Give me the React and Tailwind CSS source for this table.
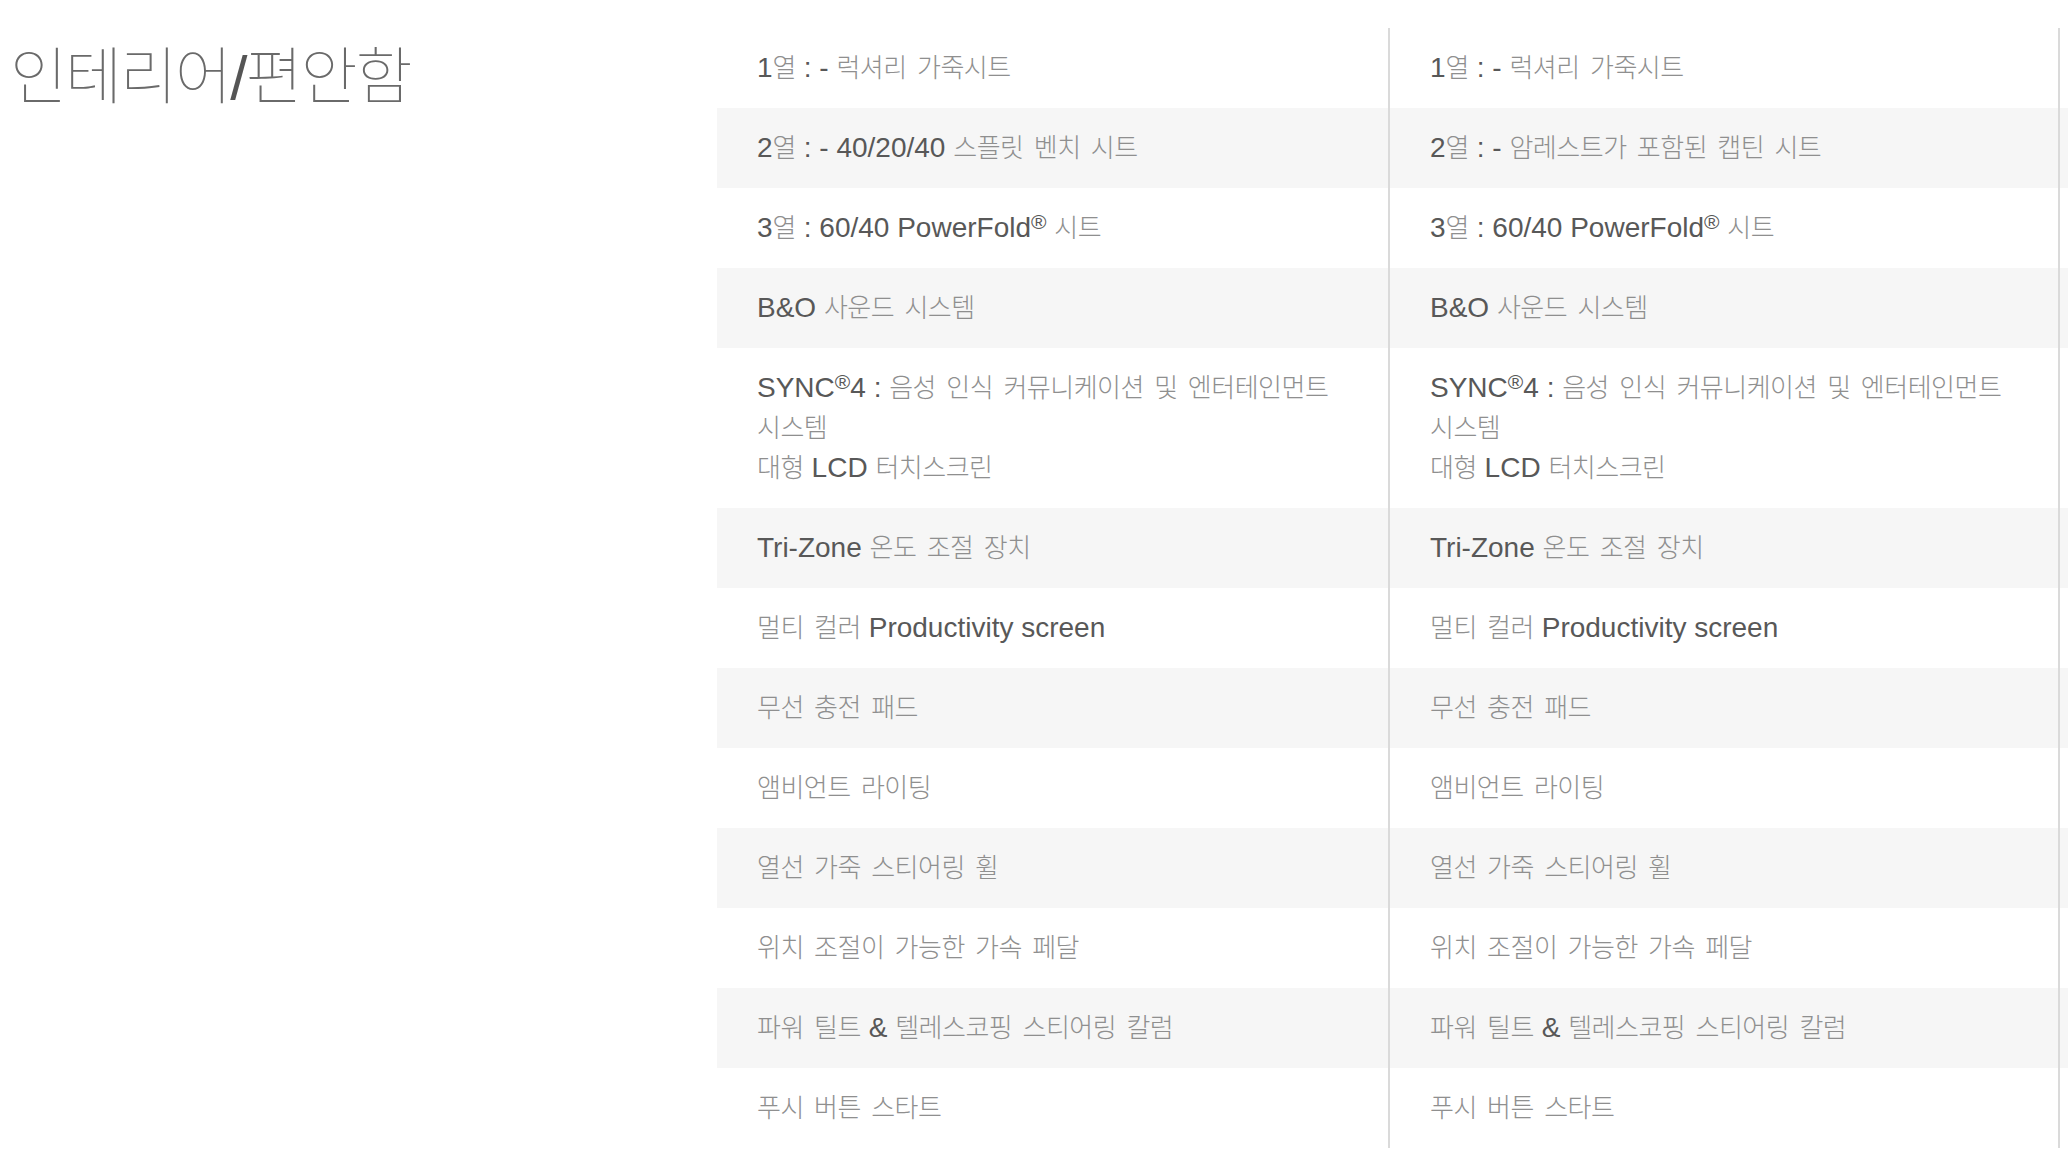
import React from "react";

const rows = [
  [["1열 : - 럭셔리 가죽시트"], ["1열 : - 럭셔리 가죽시트"]],
  [["2열 : - 40/20/40 스플릿 벤치 시트"], ["2열 : - 암레스트가 포함된 캡틴 시트"]],
  [["3열 : 60/40 PowerFold® 시트"], ["3열 : 60/40 PowerFold® 시트"]],
  [["B&O 사운드 시스템"], ["B&O 사운드 시스템"]],
  [
    ["SYNC®4 : 음성 인식 커뮤니케이션 및 엔터테인먼트", "시스템", "대형 LCD 터치스크린"],
    ["SYNC®4 : 음성 인식 커뮤니케이션 및 엔터테인먼트", "시스템", "대형 LCD 터치스크린"],
  ],
  [["Tri-Zone 온도 조절 장치"], ["Tri-Zone 온도 조절 장치"]],
  [["멀티 컬러 Productivity screen"], ["멀티 컬러 Productivity screen"]],
  [["무선 충전 패드"], ["무선 충전 패드"]],
  [["앰비언트 라이팅"], ["앰비언트 라이팅"]],
  [["열선 가죽 스티어링 휠"], ["열선 가죽 스티어링 휠"]],
  [["위치 조절이 가능한 가속 페달"], ["위치 조절이 가능한 가속 페달"]],
  [["파워 틸트 & 텔레스코핑 스티어링 칼럼"], ["파워 틸트 & 텔레스코핑 스티어링 칼럼"]],
  [["푸시 버튼 스타트"], ["푸시 버튼 스타트"]],
];

const HANGUL = /([가-힣]+(?:\s+[가-힣]+)*)/;

function Rich({ text }) {
  const parts = text.split("®");
  return parts.map((p, i) => (
    <span key={i}>
      {p.split(HANGUL).map((s, j) =>
        s === "" ? null : /[가-힣]/.test(s) ? (
          <span
            key={j}
            className="text-[26px] leading-[28px] font-light tracking-[-0.5px] text-[#8f8f8f] [word-spacing:5px] [font-family:'Noto_Sans_CJK_KR',sans-serif]"
          >
            {s}
          </span>
        ) : (
          <span key={j}>{s}</span>
        )
      )}
      {i < parts.length - 1 && <sup className="-top-[8px] text-[21px]">®</sup>}
    </span>
  ));
}

function Cell({ lines, last }) {
  return (
    <div
      className={`shrink-0 border-r-2 border-[#dadada] px-[40px] py-[20px] ${
        last ? "w-[670px]" : "w-[673px]"
      }`}
    >
      {lines.map((line, i) => (
        <div key={i} className="whitespace-nowrap">
          <Rich text={line} />
        </div>
      ))}
    </div>
  );
}

export default function App() {
  return (
    <div className="flex min-h-[1154px] w-[2068px] bg-white text-[28px] leading-[40px] text-[#585858] [font-family:'Liberation_Sans','Noto_Sans_CJK_KR',sans-serif]">

      {/* TITLE */}
      <div className="w-[717px] shrink-0 pl-[10px] pt-[41px]">
        <h1 className="text-[62px] leading-none tracking-[-2px] whitespace-nowrap">
          <span className="font-thin text-[#6a6a6a] [font-family:'Noto_Sans_CJK_KR',sans-serif]">인테리어</span>
          <span className="text-[#555]">/</span>
          <span className="font-thin text-[#6a6a6a] [font-family:'Noto_Sans_CJK_KR',sans-serif]">편안함</span>
        </h1>
      </div>

      {/* SPEC TABLE */}
      <div className="flex-1 pt-[28px]">
        {rows.map((row, i) => (
          <div key={i} className={`flex ${i % 2 === 1 ? "bg-[#f6f6f6]" : ""}`}>
            <Cell lines={row[0]} />
            <Cell lines={row[1]} last />
          </div>
        ))}
      </div>

    </div>
  );
}
